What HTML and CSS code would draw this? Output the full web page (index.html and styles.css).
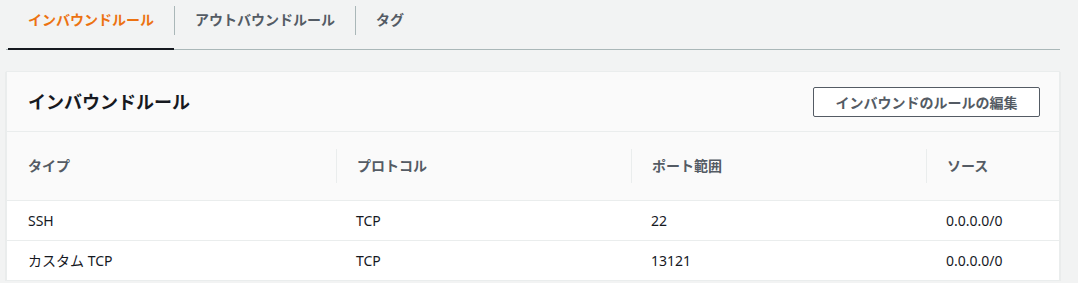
FILE: index.html
```html
<!DOCTYPE html>
<html lang="ja">

<head>
    <meta charset="UTF-8">
    <meta name="viewport" content="width=device-width, initial-scale=1.0">
    <title>セキュリティグループ</title>
    <link rel="stylesheet" href="styles.css">
</head>

<body>
    <div class="page">
        <div class="tabs">
            <a class="tab active">インバウンドルール</a>
            <span class="tab-sep"></span>
            <a class="tab">アウトバウンドルール</a>
            <span class="tab-sep"></span>
            <a class="tab">タグ</a>
        </div>

        <div class="card">
            <div class="card-header">
                <h2>インバウンドルール</h2>
                <button type="button" class="btn">インバウンドのルールの編集</button>
            </div>

            <table class="rules">
                <thead>
                    <tr>
                        <th class="col-type"><span>タイプ</span></th>
                        <th class="col-proto"><span>プロトコル</span></th>
                        <th class="col-port"><span>ポート範囲</span></th>
                        <th class="col-src"><span>ソース</span></th>
                    </tr>
                </thead>
                <tbody>
                    <tr>
                        <td>SSH</td>
                        <td>TCP</td>
                        <td>22</td>
                        <td>0.0.0.0/0</td>
                    </tr>
                    <tr>
                        <td>カスタム TCP</td>
                        <td>TCP</td>
                        <td>13121</td>
                        <td>0.0.0.0/0</td>
                    </tr>
                </tbody>
            </table>
        </div>
    </div>
</body>

</html>
```

FILE: styles.css
```css
body {
    margin: 0;
    background-color: #f2f3f3;
    font-family: "Noto Sans", "Noto Sans CJK JP", sans-serif;
    font-size: 14px;
    color: #16191f;
}

.page {
    width: 1054px;
    padding-left: 6px;
}

.tabs {
    display: flex;
    align-items: flex-start;
    padding-left: 2px;
    border-bottom: 1px solid #aab7b8;
    height: 49px;
}

.tab {
    display: block;
    height: 48px;
    box-sizing: border-box;
    padding: 10px 20px 0;
    line-height: 20px;
    font-weight: bold;
    color: #545b64;
    white-space: nowrap;
}

.tab.active {
    color: #ec7211;
    border-bottom: 2px solid #16191f;
    height: 50px;
}

.tab-sep {
    width: 1px;
    height: 29px;
    margin-top: 6px;
    background-color: #aab7b8;
}

.card {
    margin-top: 21px;
    background-color: #fff;
    border: 1px solid #eaeded;
    border-bottom: none;
    box-shadow: 0 1px 1px rgba(0, 28, 36, 0.2);
}

.card-header {
    display: flex;
    justify-content: space-between;
    align-items: center;
    height: 59px;
    padding: 0 19px 0 21px;
    background-color: #fafafa;
    border-bottom: 1px solid #eaeded;
}

.card-header h2 {
    margin: 0;
    font-size: 18px;
    font-weight: bold;
    color: #16191f;
    line-height: 22px;
}

.btn {
    height: 30px;
    width: 227px;
    padding: 0;
    margin-top: 1px;
    background-color: #fff;
    border: 1px solid #545b64;
    border-radius: 2px;
    font-family: inherit;
    font-size: 14px;
    font-weight: bold;
    color: #545b64;
}

.rules {
    width: 100%;
    border-collapse: collapse;
    table-layout: fixed;
}

.rules th {
    height: 68px;
    padding: 0;
    background-color: #fafafa;
    border-bottom: 1px solid #eaeded;
    text-align: left;
    font-weight: bold;
    color: #545b64;
}

.rules th span {
    display: block;
    padding: 7px 20px;
    line-height: 20px;
    border-left: 1px solid #eaeded;
}

.rules th.col-type span {
    border-left: none;
    padding-left: 21px;
}

.col-type {
    width: 329px;
}

.col-proto,
.col-port {
    width: 295px;
}

.rules td {
    height: 39px;
    padding: 0 20px;
    border-bottom: 1px solid #eaeded;
    line-height: 20px;
}

.rules td:first-child {
    padding-left: 21px;
}
```
